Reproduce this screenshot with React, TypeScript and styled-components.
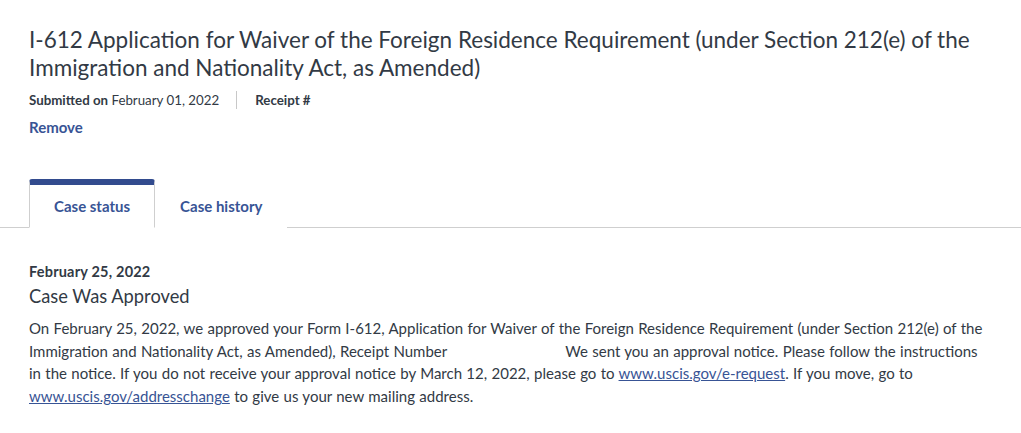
import React from 'react'
import styled, { createGlobalStyle } from 'styled-components'

const GlobalStyle = createGlobalStyle`
  body {
    margin: 0;
    background: #fff;
    font-family: Lato, 'Liberation Sans', sans-serif;
    color: #323a45;
  }
`

const Page = styled.div`
  width: 1021px;
  padding-top: 26px;
`

const Header = styled.header`
  padding: 0 29px;
`

const Title = styled.h1`
  margin: 0;
  font-size: 22.5px;
  line-height: 28px;
  font-weight: 400;
  color: #323a45;
`

const Meta = styled.div`
  display: flex;
  align-items: center;
  margin-top: 9px;
  font-size: 13.3px;
  line-height: 18px;
`

const MetaItem = styled.span`
  padding-right: 17px;
  & + & {
    padding-left: 18px;
    border-left: 1px solid #c8c8c8;
  }
`

const Strong = styled.b`
  font-weight: 700;
`

const Redacted = styled.span<{ $w: number }>`
  display: inline-block;
  width: ${(p) => p.$w}px;
`

const Remove = styled.button`
  display: block;
  margin-top: 9px;
  padding: 0;
  border: 0;
  background: none;
  font: inherit;
  font-size: 15px;
  font-weight: 700;
  color: #385495;
  cursor: pointer;
`

const TabBar = styled.nav`
  display: flex;
  margin-top: 43px;
  padding: 0 29px;
  border-bottom: 1px solid #cfcfcf;
`

const Tab = styled.button<{ $active?: boolean }>`
  height: 49px;
  margin-bottom: -1px;
  padding: 0 24px;
  border: 1px solid ${(p) => (p.$active ? '#cfcfcf' : 'transparent')};
  border-top: 6px solid ${(p) => (p.$active ? '#324b8e' : 'transparent')};
  border-bottom: 1px solid ${(p) => (p.$active ? '#fff' : 'transparent')};
  border-radius: 3px 3px 0 0;
  background: #fff;
  font: inherit;
  font-size: 15px;
  font-weight: 700;
  color: #385495;
  cursor: pointer;
`

const Status = styled.section`
  padding: 35px 29px 0;
`

const StatusDate = styled.div`
  font-size: 14.5px;
  letter-spacing: 0.2px;
  line-height: 18px;
  font-weight: 700;
`

const StatusTitle = styled.h2`
  margin: 3px 0 0;
  font-size: 18.3px;
  line-height: 24px;
  font-weight: 400;
`

const Body = styled.p`
  margin: 9px 0 0;
  font-size: 15px;
  word-spacing: 0.5px;
  line-height: 22.7px;
`

const Link = styled.a`
  color: #385495;
  text-decoration: underline;
`

export default function App() {
  return (
    <Page>
      <GlobalStyle />
      <Header>
        <Title>
          I-612 Application for Waiver of the Foreign Residence Requirement (under Section 212(e) of the
          Immigration and Nationality Act, as Amended)
        </Title>
        <Meta>
          <MetaItem>
            <Strong>Submitted on</Strong> February 01, 2022
          </MetaItem>
          <MetaItem>
            <Strong>Receipt #</Strong>
          </MetaItem>
        </Meta>
        <Remove>Remove</Remove>
      </Header>
      <TabBar>
        <Tab $active>Case status</Tab>
        <Tab>Case history</Tab>
      </TabBar>
      <Status>
        <StatusDate>February 25, 2022</StatusDate>
        <StatusTitle>Case Was Approved</StatusTitle>
        <Body>
          On February 25, 2022, we approved your Form I-612, Application for Waiver of the Foreign
          Residence Requirement (under Section 212(e) of the Immigration and Nationality Act, as
          Amended), Receipt Number <Redacted $w={110} /> We sent you an approval notice. Please
          follow the instructions in the notice. If you do not receive your approval notice by March
          12, 2022, please go to <Link href="#">www.uscis.gov/e-request</Link>. If you move, go to{' '}
          <Link href="#">www.uscis.gov/addresschange</Link> to give us your new mailing address.
        </Body>
      </Status>
    </Page>
  )
}
